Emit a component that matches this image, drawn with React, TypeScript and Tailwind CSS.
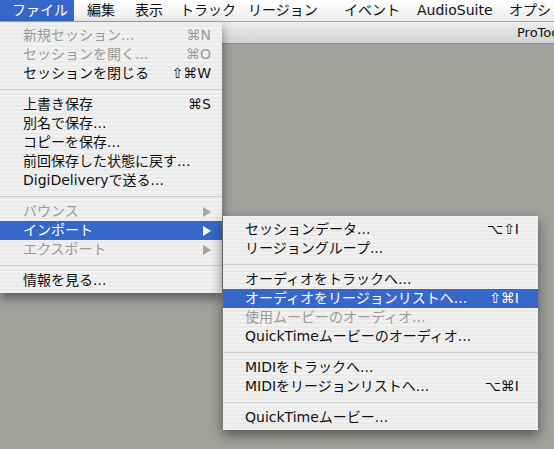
import React from "react";

type Item =
  | { sep: true }
  | {
      sep?: false;
      label: string;
      shortcut?: string;
      disabled?: boolean;
      active?: boolean;
      arrow?: boolean;
    };

const fileMenu: Item[] = [
  { label: "新規セッション...", shortcut: "⌘N", disabled: true },
  { label: "セッションを開く...", shortcut: "⌘O", disabled: true },
  { label: "セッションを閉じる", shortcut: "⇧⌘W" },
  { sep: true },
  { label: "上書き保存", shortcut: "⌘S" },
  { label: "別名で保存..." },
  { label: "コピーを保存..." },
  { label: "前回保存した状態に戻す..." },
  { label: "DigiDeliveryで送る..." },
  { sep: true },
  { label: "バウンス", arrow: true, disabled: true },
  { label: "インポート", arrow: true, active: true },
  { label: "エクスポート", arrow: true, disabled: true },
  { sep: true },
  { label: "情報を見る..." },
];

const importMenu: Item[] = [
  { label: "セッションデータ...", shortcut: "⌥⇧I" },
  { label: "リージョングループ..." },
  { sep: true },
  { label: "オーディオをトラックへ..." },
  { label: "オーディオをリージョンリストへ...", shortcut: "⇧⌘I", active: true },
  { label: "使用ムービーのオーディオ...", disabled: true },
  { label: "QuickTimeムービーのオーディオ..." },
  { sep: true },
  { label: "MIDIをトラックへ..." },
  { label: "MIDIをリージョンリストへ...", shortcut: "⌥⌘I" },
  { sep: true },
  { label: "QuickTimeムービー..." },
];

const titles = [
  { t: "編集", w: "w-[48px]" },
  { t: "表示", w: "w-[45px]" },
  { t: "トラック", w: "w-[68px]" },
  { t: "リージョン", w: "w-[96px]" },
  { t: "イベント", w: "w-[73px]" },
  { t: "AudioSuite", w: "w-[92px]" },
  { t: "オプション", w: "w-[80px]" },
];

function Arrow({ color }: { color: string }) {
  return (
    <svg width="8" height="10" viewBox="0 0 8 10">
      <polygon points="0,0 8,5 0,10" fill={color} />
    </svg>
  );
}

function Menu({ items, pl, pr }: { items: Item[]; pl: string; pr: string }) {
  return (
    <div className="flex flex-col pt-[4px] pb-[3px]">
      {items.map((it, i) => {
        if (it.sep) {
          return (
            <div key={i} className="flex h-[12px] items-center">
              <div className="h-px w-full bg-[#cfcfcf]" />
            </div>
          );
        }
        const color = it.active
          ? "text-white"
          : it.disabled
            ? "text-[#9b9b9b]"
            : "text-[#111]";
        return (
          <div
            key={i}
            className={`flex h-[19px] items-center justify-between ${pl} ${pr} ${color} ${
              it.active ? "bg-[#3767c9]" : ""
            }`}
          >
            <span className="whitespace-nowrap">{it.label}</span>
            {it.shortcut && <span className="whitespace-nowrap">{it.shortcut}</span>}
            {it.arrow && (
              <Arrow color={it.active ? "#ffffff" : it.disabled ? "#a5a5a5" : "#111"} />
            )}
          </div>
        );
      })}
    </div>
  );
}

export default function App() {
  return (
    <div className="relative flex h-[449px] w-[554px] flex-col overflow-hidden bg-[#a3a19d] font-['DejaVu_Sans','Noto_Sans_CJK_JP',sans-serif] text-[14px] leading-[19px]">
      {/* menu bar */}
      <div className="flex h-[22px] items-stretch overflow-hidden border-b border-[#a8a8a8] bg-gradient-to-b from-[#ffffff] to-[#ececec] text-[#111]">
        <div className="flex w-[74px] shrink-0 items-center whitespace-nowrap bg-[#3767c9] pl-[12px] text-white">
          ファイル
        </div>
        {titles.map((m) => (
          <div key={m.t} className={`flex shrink-0 items-center whitespace-nowrap pl-[13px] ${m.w}`}>
            {m.t}
          </div>
        ))}
      </div>

      {/* window title bar */}
      <div className="flex h-[22px] items-center overflow-hidden whitespace-nowrap border-b border-[#8d8d8d] bg-gradient-to-b from-[#ededed] to-[#d3d3d3] pl-[517px] text-[13px] text-[#111]">
        ProTools
      </div>

      <div className="flex-1" />

      {/* File menu */}
      <div className="absolute left-0 top-[22px] w-[222px] bg-[repeating-linear-gradient(0deg,#f1f1f1_0px,#f1f1f1_2px,#eaeaea_2px,#eaeaea_4px)] shadow-[0_5px_10px_rgba(0,0,0,0.45)]">
        <Menu items={fileMenu} pl="pl-[23px]" pr="pr-[11px]" />
      </div>

      {/* Import submenu */}
      <div className="absolute left-[223px] top-[216px] w-[315px] bg-[repeating-linear-gradient(0deg,#f1f1f1_0px,#f1f1f1_2px,#eaeaea_2px,#eaeaea_4px)] shadow-[0_5px_12px_rgba(0,0,0,0.5)]">
        <Menu items={importMenu} pl="pl-[22px]" pr="pr-[19px]" />
      </div>
    </div>
  );
}
